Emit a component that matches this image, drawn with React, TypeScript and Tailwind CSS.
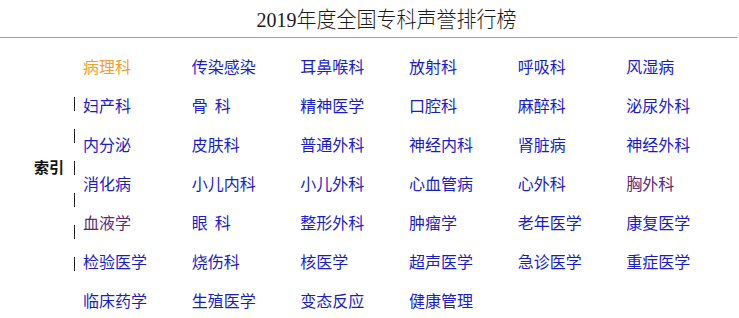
import React from "react";

type Item = { name: string; color?: "orange" | "purple" };

const items: Item[] = [
  { name: "病理科", color: "orange" },
  { name: "传染感染" },
  { name: "耳鼻喉科" },
  { name: "放射科" },
  { name: "呼吸科" },
  { name: "风湿病" },
  { name: "妇产科" },
  { name: "骨\u00a0\u00a0科" },
  { name: "精神医学" },
  { name: "口腔科" },
  { name: "麻醉科" },
  { name: "泌尿外科" },
  { name: "内分泌" },
  { name: "皮肤科" },
  { name: "普通外科" },
  { name: "神经内科" },
  { name: "肾脏病" },
  { name: "神经外科" },
  { name: "消化病" },
  { name: "小儿内科" },
  { name: "小儿外科" },
  { name: "心血管病" },
  { name: "心外科" },
  { name: "胸外科", color: "purple" },
  { name: "血液学", color: "purple" },
  { name: "眼\u00a0\u00a0科" },
  { name: "整形外科" },
  { name: "肿瘤学" },
  { name: "老年医学" },
  { name: "康复医学" },
  { name: "检验医学" },
  { name: "烧伤科" },
  { name: "核医学" },
  { name: "超声医学" },
  { name: "急诊医学" },
  { name: "重症医学" },
  { name: "临床药学" },
  { name: "生殖医学" },
  { name: "变态反应" },
  { name: "健康管理" },
];

export default function App() {
  return (
    <div className="w-[739px] h-[318px] bg-white overflow-hidden font-['Noto_Sans_CJK_SC',sans-serif]">
      {/* 标题 */}
      <div className="h-[38px] flex items-center justify-center pl-[36px] border-b border-[#a0a0a0] mr-[2px]">
        <h1 className="text-[20px] leading-none text-[#1a1a1a] font-['Liberation_Serif','Noto_Sans_CJK_SC',serif] font-light scale-y-110">
          2019年度全国专科声誉排行榜
        </h1>
      </div>

      <div className="flex pt-[9px]">
        {/* 索引 */}
        <div className="w-[83px] flex items-start shrink-0">
          <span className="ml-[34px] mt-[112px] text-[15px] leading-[16px] font-bold text-[#111]">索引</span>
          <div className="ml-[10px] mt-[50px] flex flex-col gap-[18px]">
            <div className="w-px h-[14px] bg-[#222]" />
            <div className="w-px h-[14px] bg-[#222]" />
            <div className="w-px h-[14px] bg-[#222]" />
            <div className="w-px h-[14px] bg-[#222]" />
            <div className="w-px h-[14px] bg-[#222]" />
            <div className="w-px h-[14px] bg-[#222]" />
          </div>
        </div>

        {/* 科室列表 */}
        <div className="grid grid-cols-6 w-[652px]">
          {items.map((it) => (
            <a
              key={it.name}
              href="#"
              className={
                "text-[16px] leading-[39px] whitespace-nowrap " +
                (it.color === "orange"
                  ? "text-[#f0a030]"
                  : it.color === "purple"
                  ? "text-[#5c2a78]"
                  : "text-[#1c1cc4]")
              }
            >
              {it.name}
            </a>
          ))}
        </div>
      </div>
    </div>
  );
}
